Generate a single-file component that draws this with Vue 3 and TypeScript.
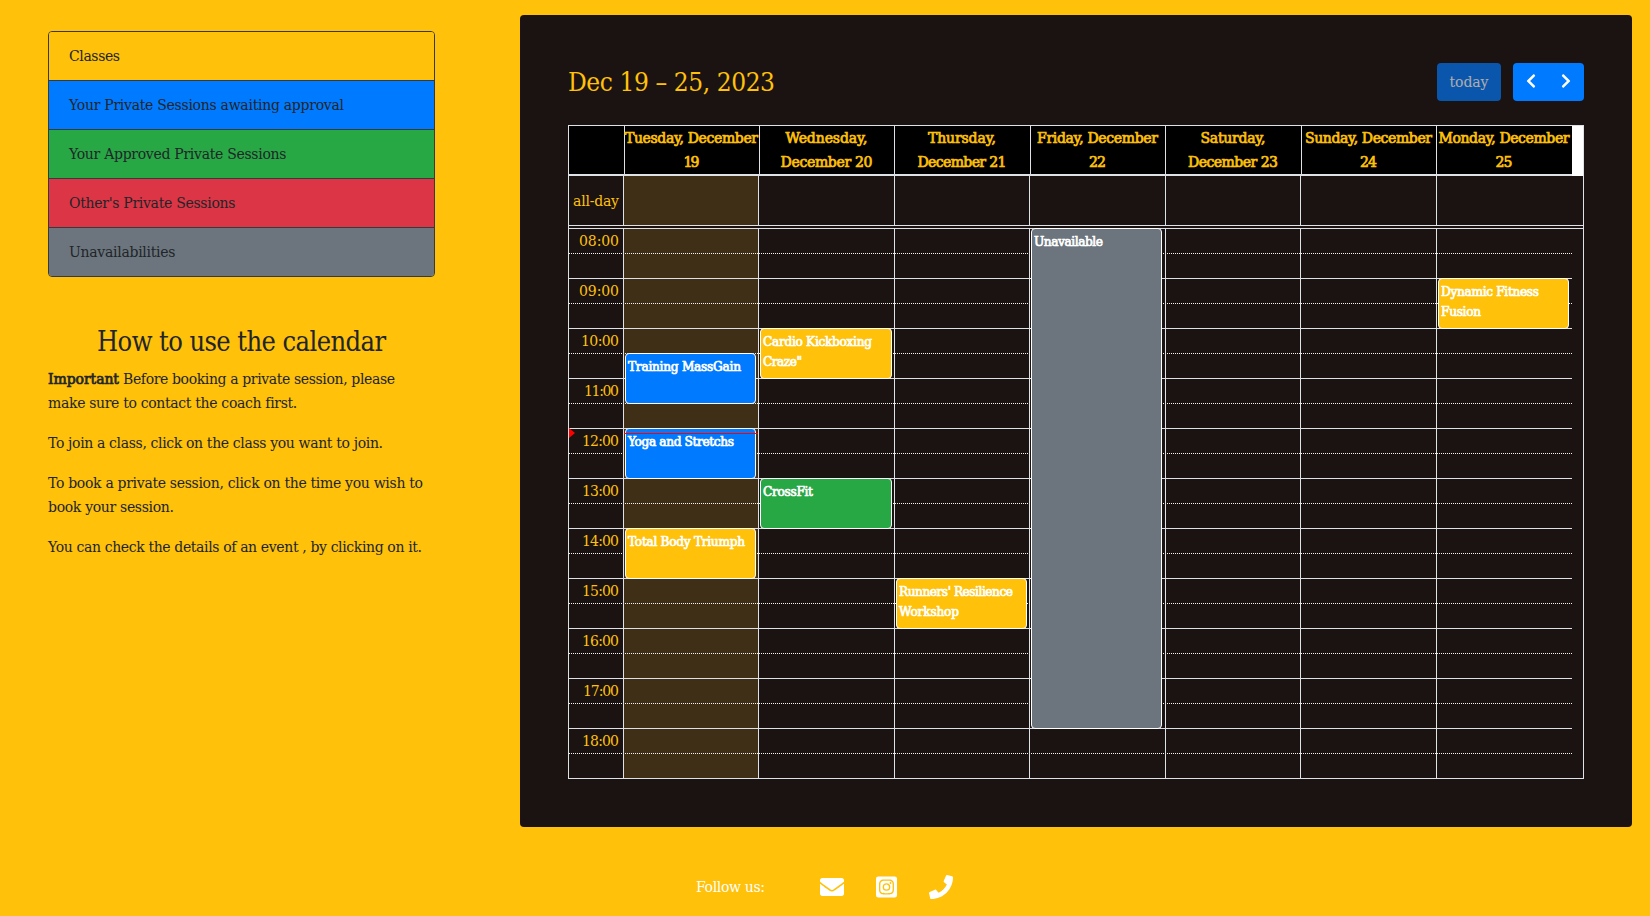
<script setup lang="ts">
import type { Directive } from 'vue'

interface Line {
  text: string
  w: number
}
interface CalendarEvent {
  start: number
  hours: number
  kind: string
  lines: Line[]
}
interface Day {
  title: Line[]
  today?: boolean
  events: CalendarEvent[]
}

// Tracks a line of text so that it fills the given width in pixels.
const vFit: Directive<HTMLElement, number> = {
  mounted(el, binding) {
    const natural = el.getBoundingClientRect().width
    const gaps = Math.max(1, (el.textContent ?? '').trim().length - 1)
    const spacing = (binding.value - natural) / gaps
    el.style.letterSpacing = `${spacing}px`
    el.style.marginRight = `${-spacing}px`
  },
}

const legend = [
  { text: 'Classes', w: 51, kind: 'warning' },
  { text: 'Your Private Sessions awaiting approval', w: 275, kind: 'primary' },
  { text: 'Your Approved Private Sessions', w: 217.5, kind: 'success' },
  { text: "Other's Private Sessions", w: 166.5, kind: 'danger' },
  { text: 'Unavailabilities', w: 106.5, kind: 'secondary' },
]

const help: Line[][] = [
  [{ text: 'To join a class, click on the class you want to join.', w: 335 }],
  [
    { text: 'To book a private session, click on the time you wish to', w: 375 },
    { text: 'book your session.', w: 126 },
  ],
  [{ text: 'You can check the details of an event , by clicking on it.', w: 374 }],
]

const days: Day[] = [
  {
    title: [{ text: 'Tuesday, December', w: 133 }, { text: '19', w: 16 }],
    today: true,
    events: [
      { start: 10.5, hours: 1, kind: 'primary', lines: [{ text: 'Training MassGain', w: 113 }] },
      { start: 12, hours: 1, kind: 'primary', lines: [{ text: 'Yoga and Stretchs', w: 106 }] },
      { start: 14, hours: 1, kind: 'warning', lines: [{ text: 'Total Body Triumph', w: 117 }] },
    ],
  },
  {
    title: [{ text: 'Wednesday,', w: 82 }, { text: 'December 20', w: 92 }],
    events: [
      { start: 10, hours: 1, kind: 'warning', lines: [{ text: 'Cardio Kickboxing', w: 109 }, { text: 'Craze"', w: 39 }] },
      { start: 13, hours: 1, kind: 'success', lines: [{ text: 'CrossFit', w: 50 }] },
    ],
  },
  {
    title: [{ text: 'Thursday,', w: 68 }, { text: 'December 21', w: 89 }],
    events: [
      { start: 15, hours: 1, kind: 'warning', lines: [{ text: "Runners' Resilience", w: 114 }, { text: 'Workshop', w: 60 }] },
    ],
  },
  {
    title: [{ text: 'Friday, December', w: 121 }, { text: '22', w: 17 }],
    events: [{ start: 8, hours: 10, kind: 'secondary', lines: [{ text: 'Unavailable', w: 69 }] }],
  },
  { title: [{ text: 'Saturday,', w: 65 }, { text: 'December 23', w: 90 }], events: [] },
  { title: [{ text: 'Sunday, December', w: 127 }, { text: '24', w: 17 }], events: [] },
  {
    title: [{ text: 'Monday, December', w: 131 }, { text: '25', w: 17 }],
    events: [
      { start: 9, hours: 1, kind: 'warning', lines: [{ text: 'Dynamic Fitness', w: 98 }, { text: 'Fusion', w: 40 }] },
    ],
  },
]

const hours: Line[] = [
  { text: '08:00', w: 40 },
  { text: '09:00', w: 40 },
  { text: '10:00', w: 38 },
  { text: '11:00', w: 35 },
  { text: '12:00', w: 37 },
  { text: '13:00', w: 37 },
  { text: '14:00', w: 37 },
  { text: '15:00', w: 37 },
  { text: '16:00', w: 37 },
  { text: '17:00', w: 36 },
  { text: '18:00', w: 37 },
]

const HOUR = 50
const eventBox = (e: CalendarEvent) => ({
  top: `${(e.start - 8) * HOUR - 1}px`,
  height: `${e.hours * HOUR + 1}px`,
})
</script>

<template>
  <div class="page">
    <main class="content">
      <aside class="side">
        <ul class="legend">
          <li v-for="item in legend" :key="item.text" :class="item.kind">
            <span v-fit="item.w" class="t">{{ item.text }}</span>
          </li>
        </ul>
        <h3 class="help-title"><span v-fit="289" class="t">How to use the calendar</span></h3>
        <p>
          <span class="line"><b v-fit="71" class="t strong">Important</b><span v-fit="272" class="t after">Before booking a private session, please</span></span>
          <span class="line"><span v-fit="249" class="t">make sure to contact the coach first.</span></span>
        </p>
        <p v-for="(para, i) in help" :key="i">
          <span v-for="l in para" :key="l.text" class="line"><span v-fit="l.w" class="t">{{ l.text }}</span></span>
        </p>
      </aside>

      <section class="card">
        <header class="toolbar">
          <h2><span v-fit="207" class="t">Dec 19 – 25, 2023</span></h2>
          <div class="buttons">
            <button class="btn today-btn" disabled><span v-fit="39" class="t">today</span></button>
            <div class="group">
              <button class="btn" aria-label="Previous">
                <svg viewBox="0 0 320 512"><path d="M34.52 239.03L228.87 44.69c9.37-9.37 24.57-9.37 33.94 0l22.67 22.67c9.36 9.36 9.37 24.52.04 33.9L131.49 256l154.02 154.75c9.34 9.38 9.32 24.54-.04 33.9l-22.67 22.67c-9.37 9.37-24.57 9.37-33.94 0L34.52 272.97c-9.37-9.37-9.37-24.57 0-33.94z" /></svg>
              </button>
              <button class="btn" aria-label="Next">
                <svg viewBox="0 0 320 512"><path d="M285.48 272.97L91.13 467.31c-9.37 9.37-24.57 9.37-33.94 0l-22.67-22.67c-9.36-9.36-9.37-24.52-.04-33.9L188.51 256 34.48 101.25c-9.34-9.38-9.32-24.54.04-33.9l22.67-22.67c9.37-9.37 24.57-9.37 33.94 0L285.48 239.03c9.37 9.37 9.37 24.57 0 33.94z" /></svg>
              </button>
            </div>
          </div>
        </header>

        <div class="calendar">
          <div class="head">
            <div class="cell axis"></div>
            <div v-for="(d, i) in days" :key="i" class="cell">
              <span v-for="l in d.title" :key="l.text" class="line"><span v-fit="l.w" class="t strong">{{ l.text }}</span></span>
            </div>
            <div class="filler"></div>
          </div>

          <div class="allday cols">
            <div class="label"><span v-fit="46" class="t">all-day</span></div>
            <div v-for="(d, i) in days" :key="i" class="col" :class="{ today: d.today }"></div>
          </div>
          <div class="divider"></div>

          <div class="timegrid">
            <div class="days cols">
              <div></div>
              <div v-for="(d, i) in days" :key="i" class="col" :class="{ today: d.today }"></div>
            </div>
            <div class="hours">
              <div v-for="h in hours" :key="h.text" class="hour">
                <div class="half"><span v-fit="h.w" class="t">{{ h.text }}</span></div>
                <div class="half dotted"></div>
              </div>
            </div>
            <div class="days cols">
              <div><i class="now-arrow"></i></div>
              <div v-for="(d, i) in days" :key="i" class="col lane">
                <article v-for="e in d.events" :key="e.start" class="event" :class="e.kind" :style="eventBox(e)">
                  <span v-for="l in e.lines" :key="l.text" class="eline"><span v-fit="l.w" class="t strong">{{ l.text }}</span></span>
                </article>
                <i v-if="d.today" class="now-line"></i>
              </div>
            </div>
          </div>
        </div>
      </section>
    </main>

    <footer class="footer">
      <span class="follow"><span v-fit="69" class="t">Follow us:</span></span>
      <svg class="mail" viewBox="0 0 512 512"><path d="M502.3 190.8c3.9-3.1 9.7-.2 9.7 4.7V400c0 26.5-21.5 48-48 48H48c-26.5 0-48-21.5-48-48V195.6c0-5 5.7-7.8 9.7-4.7 22.4 17.4 52.1 39.5 154.1 113.6 21.1 15.4 56.7 47.8 92.2 47.6 35.7.3 72-32.8 92.3-47.6 102-74.1 131.6-96.3 154-113.7zM256 320c23.2.4 56.6-29.2 73.4-41.4 132.7-96.3 142.8-104.7 173.4-128.7 5.8-4.5 9.2-11.5 9.2-18.9v-19c0-26.5-21.5-48-48-48H48c-26.5 0-48 21.5-48 48v19c0 7.4 3.4 14.3 9.2 18.9 30.6 23.9 40.7 32.4 173.4 128.7 16.8 12.2 50.2 41.8 73.4 41.4z" /></svg>
      <svg class="insta" viewBox="0 0 448 512"><path d="M224,202.66A53.34,53.34,0,1,0,277.36,256,53.38,53.38,0,0,0,224,202.66Zm124.71-41a54,54,0,0,0-30.41-30.41c-21-8.29-71-6.43-94.3-6.43s-73.25-1.93-94.31,6.43a54,54,0,0,0-30.41,30.41c-8.28,21-6.43,71.05-6.43,94.33S91,329.26,99.32,350.33a54,54,0,0,0,30.41,30.41c21,8.29,71,6.43,94.31,6.43s73.24,1.93,94.3-6.43a54,54,0,0,0,30.41-30.41c8.35-21,6.43-71.05,6.43-94.33S357.1,182.74,348.75,161.67ZM224,338a82,82,0,1,1,82-82A81.9,81.9,0,0,1,224,338Zm85.38-148.3a19.14,19.14,0,1,1,19.13-19.14A19.1,19.1,0,0,1,309.42,189.74ZM400,32H48A48,48,0,0,0,0,80V432a48,48,0,0,0,48,48H400a48,48,0,0,0,48-48V80A48,48,0,0,0,400,32ZM382.88,322c-1.29,25.63-7.14,48.34-25.85,67s-41.4,24.63-67,25.85c-26.41,1.49-105.59,1.49-132,0-25.63-1.29-48.26-7.15-67-25.85s-24.63-41.42-25.85-67c-1.49-26.42-1.49-105.61,0-132,1.29-25.63,7.07-48.34,25.85-67s41.47-24.56,67-25.78c26.41-1.49,105.59-1.49,132,0,25.63,1.29,48.33,7.15,67,25.85s24.63,41.42,25.85,67.05C384.37,216.44,384.37,295.56,382.88,322Z" /></svg>
      <svg class="phone" viewBox="0 0 512 512"><path d="M493.4 24.6l-104-24c-11.3-2.6-22.9 3.3-27.5 13.9l-48 112c-4.2 9.8-1.4 21.3 6.9 28l60.6 49.6c-36 76.7-98.9 140.5-177.2 177.2l-49.6-60.6c-6.8-8.3-18.2-11.1-28-6.9l-112 48C3.9 366.5-2 378.1.6 389.4l24 104C27.1 504.2 36.7 512 48 512c256.1 0 464-207.5 464-464 0-11.2-7.7-20.9-18.6-23.4z" /></svg>
    </footer>
  </div>
</template>

<style>
body {
  margin: 0;
  background: #ffc109;
}
</style>

<style scoped>
.page {
  box-sizing: border-box;
  width: 1650px;
  height: 916px;
  padding-top: 15px;
  overflow: hidden;
  background: #ffc109;
  color: #212529;
  font-family: "DejaVu Serif", serif;
  font-size: 14px;
  line-height: 24px;
}
.page *,
.page *::before {
  box-sizing: border-box;
}
.t {
  display: inline-block;
  white-space: pre;
}
.strong {
  font-weight: 400;
  -webkit-text-stroke: 0.7px currentColor;
}
.line {
  display: block;
  height: 24px;
  white-space: nowrap;
}
.warning { background: #ffc109; }
.primary { background: #007bff; }
.success { background: #28a745; }
.danger { background: #dc3545; }
.secondary { background: #6c757d; }

.content {
  display: flex;
  height: 812px;
}
.side {
  width: 387px;
  margin: 16px 85px 0 48px;
}
.legend {
  margin: 0;
  padding: 0;
  list-style: none;
  border: 1px solid #343a40;
  border-radius: 4px;
  overflow: hidden;
}
.legend li {
  height: 49px;
  padding: 12px 20px;
  border-top: 1px solid #343a40;
}
.legend li:first-child {
  height: 48px;
  border-top: 0;
}
.help-title {
  margin: 48px 0 8px;
  font-family: "DejaVu Serif Condensed", "DejaVu Serif", serif;
  font-size: 27px;
  font-weight: 400;
  line-height: 34px;
  text-align: center;
}
p {
  margin: 0 0 16px;
}
.after {
  margin-left: 4px;
}

.card {
  width: 1112px;
  padding: 48px;
  background: #1b1212;
  border-radius: 4px;
  color: #ffc109;
}
.toolbar {
  display: flex;
  justify-content: space-between;
  height: 38px;
  margin-bottom: 24px;
}
h2 {
  margin: 0;
  font-family: "DejaVu Serif Condensed", "DejaVu Serif", serif;
  font-size: 26px;
  font-weight: 400;
  line-height: 38px;
}
.buttons {
  display: flex;
  gap: 12px;
}
.btn {
  display: flex;
  align-items: center;
  justify-content: center;
  width: 35px;
  height: 38px;
  padding: 0;
  border: 0;
  background: transparent;
  color: #fff;
  font: inherit;
}
.today-btn {
  width: 64px;
  border-radius: 4px;
  background: #007bff;
  opacity: 0.65;
}
.group {
  display: flex;
  width: 71px;
  border-radius: 4px;
  background: #007bff;
}
.btn svg {
  width: 10px;
  height: 16px;
  margin-top: -2px;
  fill: #fff;
}

.calendar {
  width: 1016px;
  height: 654px;
  border: 1px solid #dee2e6;
}
.head {
  display: grid;
  grid-template-columns: 55px 135px 135px 136px 135px 136px 135px 136px 11px;
  height: 50px;
}
.head .cell {
  padding-right: 1px;
  border-left: 1px solid #dee2e6;
  border-bottom: 2px solid #dee2e6;
  background: #000;
  text-align: center;
}
.head .axis {
  border-left: 0;
}
.filler {
  background: #fff;
}
.cols {
  display: grid;
  grid-template-columns: 54px 135px 136px 135px 136px 135px 136px 136px;
}
.allday {
  height: 49px;
}
.label {
  padding: 13px 4px 0 0;
  text-align: right;
}
.col {
  border-left: 1px solid #dee2e6;
}
.today {
  background: #3e2f16;
}
.divider {
  height: 4px;
  border-top: 1px solid #dee2e6;
  border-bottom: 1px solid #dee2e6;
}
.timegrid {
  position: relative;
  height: 549px;
}
.days {
  position: absolute;
  inset: 0 11px 0 0;
}
.hours {
  position: relative;
  width: 1003px;
}
.hour {
  border-top: 1px solid #dee2e6;
}
.hour:first-child {
  border-top: 0;
}
.half {
  width: 1003px;
  height: 24px;
  padding-right: 953px;
  display: flex;
  justify-content: flex-end;
}
.half.dotted {
  height: 25px;
  border-top: 1px dotted #f4f4f4;
}
.lane {
  position: relative;
}
.event {
  position: absolute;
  left: 1px;
  width: 131px;
  padding: 3px 0 0 2px;
  border: 1px solid #fff;
  border-radius: 4px;
  color: #fff;
  font-size: 12.2px;
}
.lane:nth-child(3) .event {
  width: 132px;
}
.eline {
  display: block;
  height: 20px;
  line-height: 20px;
}
.now-line {
  position: absolute;
  top: 204px;
  left: 0;
  right: 0;
  height: 1px;
  background: #f00;
}
.now-arrow {
  position: absolute;
  top: 199px;
  left: 0;
  border: 5px solid transparent;
  border-left: 6px solid #f00;
  border-right: 0;
}

.footer {
  display: flex;
  align-items: center;
  height: 48px;
  margin: 36px 0 0 696px;
  color: #fff;
}
.follow {
  width: 124px;
}
.footer svg {
  height: 24px;
  fill: #fff;
}
.mail {
  width: 24px;
}
.insta {
  width: 21px;
  margin: 0 32px;
}
.phone {
  width: 24px;
}
</style>
